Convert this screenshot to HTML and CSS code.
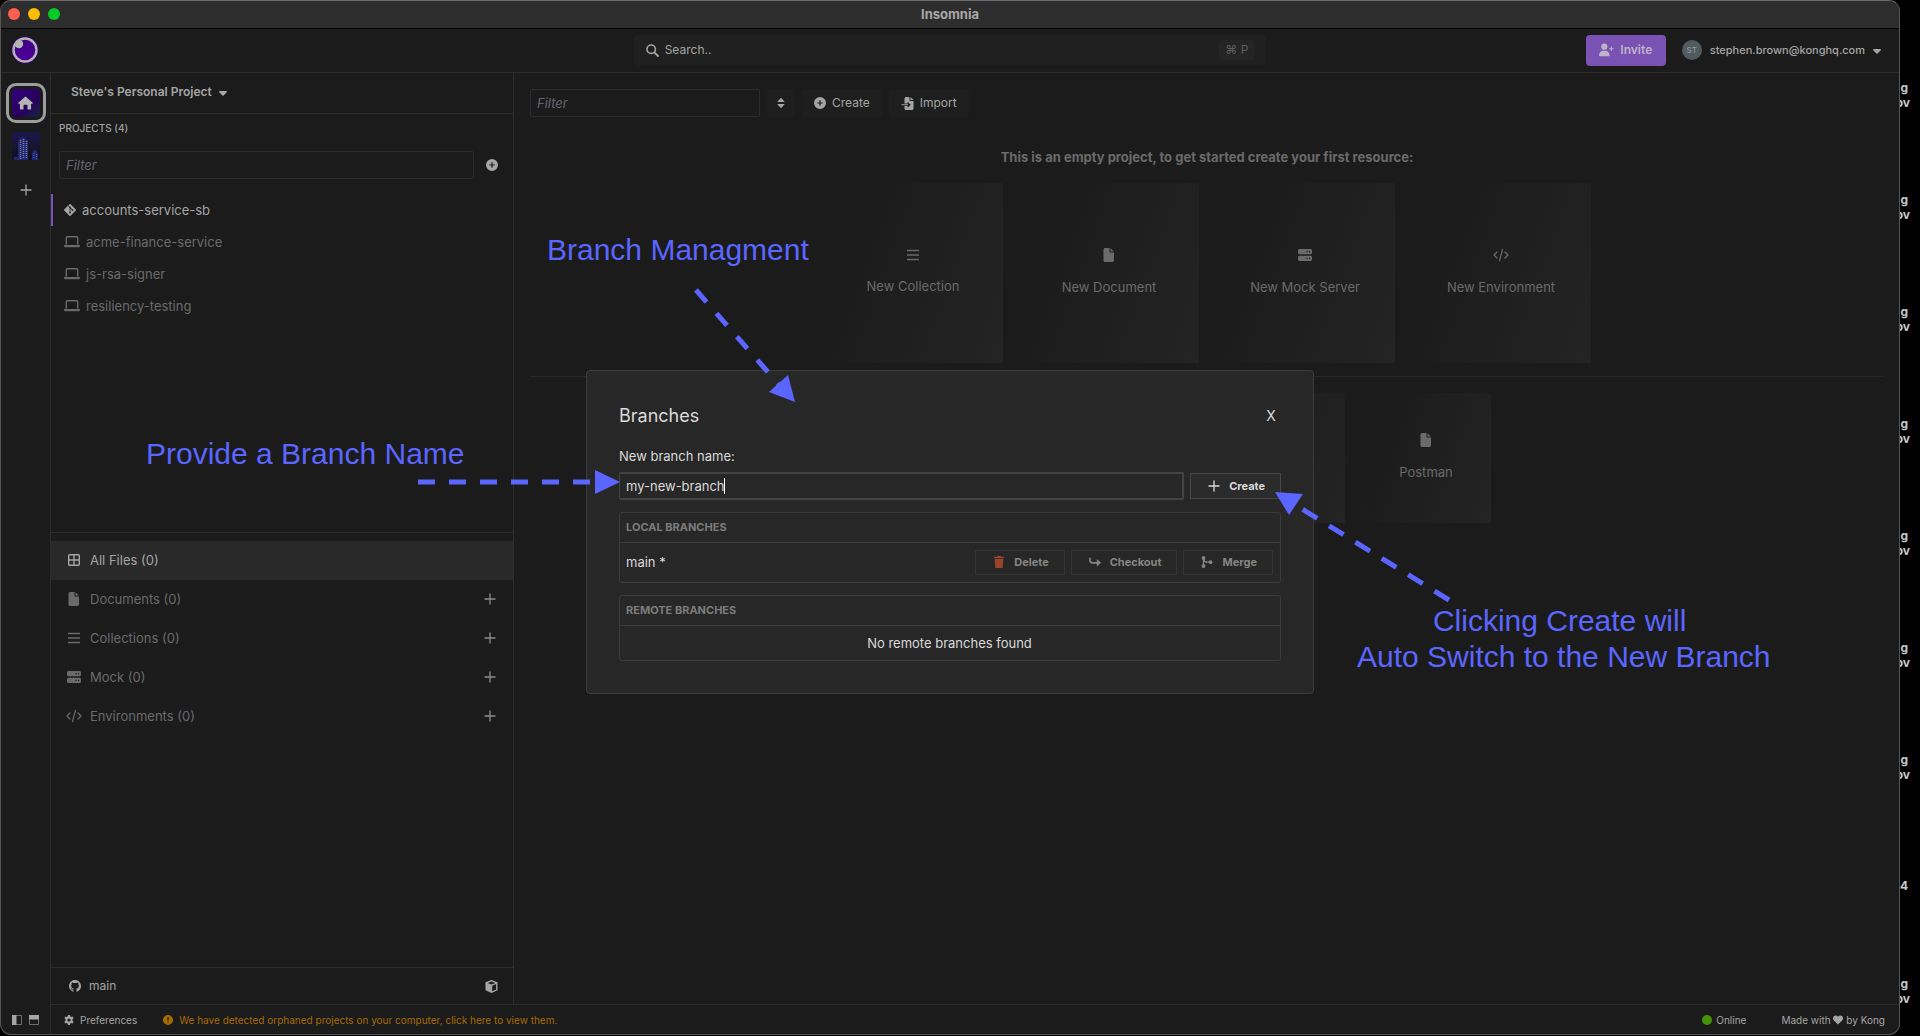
FILE: index.html
```html
<!DOCTYPE html>
<html lang="en">
<head>
<meta charset="utf-8">
<meta name="viewport" content="width=device-width, initial-scale=1">
<title>Insomnia</title>
<link rel="stylesheet" href="styles.css">
</head>
<body>
<svg class="sprite" aria-hidden="true">
  <symbol id="i-caret" viewBox="0 0 320 512"><path d="M137.4 374.6c12.5 12.5 32.8 12.5 45.3 0l128-128c9.2-9.2 11.9-22.9 6.9-34.9s-16.6-19.8-29.6-19.8L32 192c-12.9 0-24.6 7.8-29.6 19.8s-2.2 25.7 6.9 34.9l128 128z"/></symbol>
  <symbol id="i-search" viewBox="0 0 13 13"><circle cx="5.2" cy="5.2" r="4.2" fill="none" stroke="currentColor" stroke-width="1.6"/><path d="M8.3 8.3L12 12" stroke="currentColor" stroke-width="1.8" stroke-linecap="round"/></symbol>
  <symbol id="i-plus" viewBox="0 0 12 12"><path d="M6 1v10M1 6h10" fill="none" stroke="currentColor" stroke-width="1.3" stroke-linecap="round"/></symbol>
  <symbol id="i-circle-plus" viewBox="0 0 12 12"><path fill-rule="evenodd" d="M6 0a6 6 0 1 1 0 12A6 6 0 0 1 6 0zM5.4 3.3v2.1H3.3v1.2h2.1v2.1h1.2V6.6h2.1V5.4H6.6V3.3z"/></symbol>
  <symbol id="i-git" viewBox="0 32 448 448"><path d="M439.55 236.05L244 40.45a28.87 28.87 0 0 0-40.81 0l-40.66 40.63 51.52 51.52c27.06-9.14 52.68 16.77 43.39 43.68l49.66 49.66c34.23-11.8 61.18 31 35.47 56.69-26.49 26.49-70.21-2.87-56-37.34L240.22 199v121.85c25.3 12.54 22.26 41.85 9.08 55a34.34 34.34 0 0 1-48.55 0c-17.57-17.6-11.07-46.91 11.25-56v-123c-20.8-8.51-24.6-30.74-18.64-45L142.57 101 8.45 235.14a28.86 28.86 0 0 0 0 40.81l195.61 195.6a28.86 28.86 0 0 0 40.8 0l194.69-194.69a28.86 28.86 0 0 0 0-40.81z"/></symbol>
  <symbol id="i-laptop" viewBox="0 0 16 13"><path d="M2.3 9V2.2c0-.6.4-1 1-1h9.4c.6 0 1 .4 1 1V9" fill="none" stroke="currentColor" stroke-width="1.4"/><path d="M0 9.6h16v.6c0 1-.8 1.600-1.600 1.600H1.600C.8 11.800 0 11.200 0 10.200z"/></symbol>
  <symbol id="i-grid" viewBox="0 0 12 12"><path d="M1.700.7h8.600a1 1 0 0 1 1 1v8.600a1 1 0 0 1-1 1H1.700a1 1 0 0 1-1-1V1.700a1 1 0 0 1 1-1zM6 1v10M1 6h10" fill="none" stroke="currentColor" stroke-width="1.400"/></symbol>
  <symbol id="i-file" viewBox="0 0 11 14"><path d="M1.500 0H6v3.500c0 .6.400 1 1 1h3.500v8c0 .8-.7 1.500-1.500 1.500H1.500C.7 14 0 13.300 0 12.500v-11C0 .7.700 0 1.500 0z"/><path d="M7 .2L10.300 3.500H7z"/></symbol>
  <symbol id="i-bars" viewBox="0 0 12 12"><path d="M0 1.500h12M0 6h12M0 10.500h12" stroke="currentColor" stroke-width="1.300"/></symbol>
  <symbol id="i-server" viewBox="0 0 14 12"><path fill-rule="evenodd" d="M1.500 0h11C13.300 0 14 .7 14 1.500v2.200c0 .8-.7 1.500-1.500 1.500h-11C.7 5.200 0 4.500 0 3.700V1.500C0 .7.700 0 1.500 0zM8.500 2v1.200h1.200V2zM11 2v1.200h1.200V2zM1.500 6.800h11c.8 0 1.500.7 1.500 1.500v2.200c0 .8-.7 1.500-1.500 1.500h-11C.7 12 0 11.300 0 10.500V8.300c0-.8.7-1.500 1.500-1.500zM8.500 8.800V10h1.200V8.800zM11 8.800V10h1.200V8.800z"/></symbol>
  <symbol id="i-code" viewBox="0 0 16 13"><path d="M4 3.500L1 6.500l3 3M12 3.500l3 3-3 3M9.500.8l-3 11.400" fill="none" stroke="currentColor" stroke-width="1.300" stroke-linecap="round" stroke-linejoin="round"/></symbol>
  <symbol id="i-sort" viewBox="0 0 8 12"><path d="M4 .8L7.800 5H.2zM4 11.200L.2 7h7.600z"/></symbol>
  <symbol id="i-import" viewBox="0 0 12 13"><path fill-rule="evenodd" d="M4.500 0H8v3c0 .6.400 1 1 1h3v7.500c0 .8-.7 1.500-1.500 1.500h-6C3.700 13 3 12.300 3 11.500V9h3v1.800L9.200 7.700 6 4.700V6.500H3v-5C3 .7 3.700 0 4.500 0z"/><path d="M9 0l3 3H9zM0 7.200h6.500v1H0z"/></symbol>
  <symbol id="i-user-plus" viewBox="0 0 15 13"><circle cx="5.300" cy="3.200" r="3.100"/><path d="M0 12c0-2.800 2-4.700 4.300-4.700h2c2.300 0 4.300 1.900 4.300 4.700 0 .5-.3.800-.8.800h-9C.3 12.800 0 12.500 0 12zM11.900 3h1v1.700h1.700v1h-1.700v1.700h-1V5.700h-1.700v-1h1.700z"/></symbol>
  <symbol id="i-house" viewBox="0 0 15 13"><path d="M7.500 0L15 6.500l-.6.800h-1.300V12c0 .6-.4 1-1 1H9.500V9c0-.4-.3-.7-.7-.7H6.200c-.4 0-.7.3-.7.700v4H2.900c-.6 0-1-.4-1-1V7.300H.6L0 6.500z"/></symbol>
  <symbol id="i-github" viewBox="0 0 16 16"><path d="M8 0C3.580 0 0 3.580 0 8c0 3.540 2.290 6.530 5.470 7.590.4.070.55-.17.55-.38 0-.19-.01-.82-.01-1.490-2.010.37-2.530-.49-2.690-.94-.09-.23-.48-.94-.82-1.130-.28-.15-.68-.52-.01-.53.63-.01 1.080.58 1.230.82.720 1.210 1.870.87 2.330.66.070-.52.280-.87.510-1.070-1.780-.2-3.640-.89-3.640-3.950 0-.87.310-1.590.820-2.150-.08-.2-.36-1.020.080-2.120 0 0 .67-.21 2.200.82.640-.18 1.320-.27 2-.27.680 0 1.360.090 2 .27 1.530-1.040 2.200-.82 2.200-.82.440 1.100.16 1.920.080 2.120.51.56.82 1.270.82 2.150 0 3.070-1.870 3.750-3.650 3.950.29.250.54.73.54 1.480 0 1.070-.01 1.930-.01 2.200 0 .21.150.46.550.38A8.013 8.013 0 0016 8c0-4.420-3.580-8-8-8z"/></symbol>
  <symbol id="i-cube" viewBox="0 0 12 13"><path fill-rule="evenodd" d="M6 0l6 2.300v8L6 13l-6-2.700v-8zM6 1.500L2.200 2.900 6 4.400l3.800-1.500zM6.700 5.700v5.500l3.900-1.800V4.100z"/></symbol>
  <symbol id="i-gear" viewBox="0 0 12 12"><path fill-rule="evenodd" d="M4.800 0h2.400l.4 1.700 1 .6 1.700-.5 1.200 2.100-1.300 1.200v1.800l1.300 1.200-1.200 2.100-1.700-.5-1 .6L7.200 12H4.800l-.4-1.700-1-.6-1.700.5L.5 8.100l1.300-1.200V5.100L.5 3.900l1.200-2.100 1.700.5 1-.6zM6 4.100a1.900 1.900 0 1 0 0 3.800 1.900 1.900 0 0 0 0-3.800z"/></symbol>
  <symbol id="i-alert" viewBox="0 0 12 12"><path fill-rule="evenodd" d="M6 0a6 6 0 1 1 0 12A6 6 0 0 1 6 0zM5.300 2.800v3.700h1.400V2.800zM5.300 7.800v1.400h1.400V7.800z"/></symbol>
  <symbol id="i-heart" viewBox="0 0 12 11"><path d="M6 11L1 6.200C-.5 4.600-.3 2 1.300.8 2.800-.4 4.800 0 6 1.500 7.200 0 9.200-.4 10.700.8c1.600 1.200 1.800 3.800.3 5.400z"/></symbol>
  <symbol id="i-trash" viewBox="0 0 10 12"><path d="M3.200 0h3.600l.5.700H10v1.200H0V.7h2.700zM.7 2.700h8.600l-.5 8.200c0 .6-.5 1.100-1.100 1.100H2.300c-.6 0-1.100-.5-1.100-1.100z"/></symbol>
  <symbol id="i-turn" viewBox="0 0 12 9"><path d="M1 .8v2c0 1.500 1 2.500 2.500 2.500h5" fill="none" stroke="currentColor" stroke-width="1.700" stroke-linecap="round"/><path d="M7.800 1.500L12 5.300 7.800 9z"/></symbol>
  <symbol id="i-merge" viewBox="0 0 11 12"><circle cx="2" cy="2" r="1.900"/><circle cx="2" cy="10" r="1.900"/><circle cx="9" cy="6.200" r="1.900"/><path d="M2 2v8M2 3c.5 2.300 2 3.200 4 3.200h3" fill="none" stroke="currentColor" stroke-width="1.300"/></symbol>
  <symbol id="i-panel-left" viewBox="0 0 10 10"><path d="M.5.5h9v9h-9z" fill="none" stroke="currentColor" opacity=".6"/><path d="M0 0h4.500v10H0z"/></symbol>
  <symbol id="i-panel-top" viewBox="0 0 10 10"><path d="M.5.5h9v9h-9z" fill="none" stroke="currentColor" opacity=".6"/><path d="M0 0h10v4.500H0z"/></symbol>
</svg>

<div class="desktop">
  <main class="window">
    <div class="titlebar">
      <div class="lights"><span class="light red"></span><span class="light yellow"></span><span class="light green"></span></div>
      <h1 class="window-title">Insomnia</h1>
    </div>

    <div class="app">
      <header class="topbar">
        <svg class="logo" viewBox="0 0 28 28" aria-label="Insomnia">
          <defs><linearGradient id="logo-fill" x1="0" y1="0" x2="0" y2="1"><stop offset="0" stop-color="#3d0080"/><stop offset="1" stop-color="#51009c"/></linearGradient></defs>
          <circle cx="14" cy="14" r="13.500" fill="#3b0087"/>
          <circle cx="14" cy="14" r="11.500" fill="url(#logo-fill)" stroke="#b4b4b4" stroke-width="2.400"/>
          <circle cx="8" cy="8" r="4.200" fill="#b4b4b4"/>
        </svg>
        <button class="search" type="button">
          <svg class="icon i13"><use href="#i-search"/></svg><span>Search..</span><kbd class="shortcut">⌘ P</kbd>
        </button>
        <div class="account">
          <button class="invite" type="button"><svg class="icon i15"><use href="#i-user-plus"/></svg>Invite</button>
          <button class="user" type="button"><span class="avatar">ST</span><span>stephen.brown@konghq.com</span><svg class="icon caret"><use href="#i-caret"/></svg></button>
        </div>
      </header>

      <nav class="rail" aria-label="Organizations">
        <div class="orgs">
          <a class="org org-home" href="#" aria-label="Home"><span class="tile"><svg class="icon i15"><use href="#i-house"/></svg></span></a>
          <a class="org" href="#" aria-label="Organization">
            <svg class="tile-art" viewBox="0 0 28 28">
              <defs><linearGradient id="sky" x1="0" y1="0" x2="0" y2="1"><stop offset="0" stop-color="#1c1750"/><stop offset=".55" stop-color="#17142e"/><stop offset="1" stop-color="#0e0e22"/></linearGradient></defs>
              <rect width="28" height="28" rx="4" fill="url(#sky)"/>
              <path d="M6 9l2-2V5.500h5V7l3 1.500V28H6z" fill="#20286b"/>
              <path d="M2 25h4v3H2zM20 21l2-3h2l2 4v6h-6z" fill="#202a70"/>
              <path d="M8.500 8v19M11.500 7v20M14.500 9v18" stroke="#7a80b0" stroke-width="1.500" stroke-dasharray="1 1"/>
              <path d="M22 21v6M24.500 22v5" stroke="#4a55a0" stroke-dasharray="1 1"/>
            </svg>
          </a>
          <button class="add-org" type="button" aria-label="Add organization"><svg class="icon i12"><use href="#i-plus"/></svg></button>
        </div>
        <div class="panels">
          <button type="button" aria-label="Toggle sidebar"><svg class="icon i10"><use href="#i-panel-left"/></svg></button>
          <button type="button" aria-label="Toggle layout"><svg class="icon i10"><use href="#i-panel-top"/></svg></button>
        </div>
      </nav>

      <aside class="sidebar">
        <button class="org-menu" type="button">Steve's Personal Project<svg class="icon caret"><use href="#i-caret"/></svg></button>
        <div class="lists">
          <section class="projects">
            <h2 class="caption">PROJECTS (4)</h2>
            <div class="filter-row">
              <input class="filter" type="text" placeholder="Filter" aria-label="Filter projects">
              <button class="plain" type="button" aria-label="Create project"><svg class="icon i12"><use href="#i-circle-plus"/></svg></button>
            </div>
            <ul class="project-list">
              <li><a class="project current" href="#"><svg class="icon i12"><use href="#i-git"/></svg>accounts-service-sb</a></li>
              <li><a class="project" href="#"><svg class="icon i16"><use href="#i-laptop"/></svg>acme-finance-service</a></li>
              <li><a class="project" href="#"><svg class="icon i16"><use href="#i-laptop"/></svg>js-rsa-signer</a></li>
              <li><a class="project" href="#"><svg class="icon i16"><use href="#i-laptop"/></svg>resiliency-testing</a></li>
            </ul>
          </section>
          <ul class="scopes">
            <li class="scope current"><a href="#"><svg class="icon i12"><use href="#i-grid"/></svg>All Files (0)</a></li>
            <li class="scope"><a href="#"><svg class="icon i14"><use href="#i-file"/></svg>Documents (0)</a><button class="plain" type="button" aria-label="New document"><svg class="icon i12"><use href="#i-plus"/></svg></button></li>
            <li class="scope"><a href="#"><svg class="icon i12"><use href="#i-bars"/></svg>Collections (0)</a><button class="plain" type="button" aria-label="New collection"><svg class="icon i12"><use href="#i-plus"/></svg></button></li>
            <li class="scope"><a href="#"><svg class="icon i14"><use href="#i-server"/></svg>Mock (0)</a><button class="plain" type="button" aria-label="New mock server"><svg class="icon i12"><use href="#i-plus"/></svg></button></li>
            <li class="scope"><a href="#"><svg class="icon i16"><use href="#i-code"/></svg>Environments (0)</a><button class="plain" type="button" aria-label="New environment"><svg class="icon i12"><use href="#i-plus"/></svg></button></li>
          </ul>
        </div>
        <div class="git-bar">
          <button class="plain branch" type="button"><svg class="icon i12"><use href="#i-github"/></svg>main</button>
          <button class="plain" type="button" aria-label="Commit"><svg class="icon i13"><use href="#i-cube"/></svg></button>
        </div>
      </aside>

      <section class="content">
        <div class="toolbar">
          <input class="filter" type="text" placeholder="Filter" aria-label="Filter files">
          <button class="tool sort" type="button" aria-label="Sort"><svg class="icon i12"><use href="#i-sort"/></svg></button>
          <button class="tool" type="button"><svg class="icon i12"><use href="#i-circle-plus"/></svg>Create</button>
          <button class="tool" type="button"><svg class="icon i13"><use href="#i-import"/></svg>Import</button>
        </div>
        <p class="empty">This is an empty project, to get started create your first resource:</p>
        <div class="cards">
          <button class="card" type="button"><svg class="icon i12"><use href="#i-bars"/></svg>New Collection</button>
          <button class="card" type="button"><svg class="icon i14"><use href="#i-file"/></svg>New Document</button>
          <button class="card" type="button"><svg class="icon i14"><use href="#i-server"/></svg>New Mock Server</button>
          <button class="card" type="button"><svg class="icon i16"><use href="#i-code"/></svg>New Environment</button>
        </div>
        <hr class="rule">
        <div class="cards sources">
          <div class="card"></div>
          <div class="card"></div>
          <div class="card"></div>
          <button class="card" type="button"><svg class="icon i14"><use href="#i-file"/></svg>Postman</button>
        </div>
      </section>

      <footer class="statusbar">
        <button class="plain status" type="button"><svg class="icon i10"><use href="#i-gear"/></svg>Preferences</button>
        <button class="plain status warning" type="button"><svg class="icon i10"><use href="#i-alert"/></svg>We have detected orphaned projects on your computer, click here to view them.</button>
        <span class="status online"><span class="dot"></span>Online</span>
        <a class="status credit" href="#">Made with <svg class="icon i10"><use href="#i-heart"/></svg> by Kong</a>
      </footer>
    </div>

    <div class="backdrop">
      <div class="dialog" role="dialog" aria-labelledby="dialog-title">
        <div class="dialog-head">
          <h2 class="dialog-title" id="dialog-title">Branches</h2>
          <button class="close" type="button" aria-label="Close">X</button>
        </div>
        <form class="new-branch">
          <label class="field-label" for="branch">New branch name:</label>
          <div class="field-row">
            <div class="field"><input class="branch-input" id="branch" type="text" value="my-new-branch"><span class="text-caret"></span></div>
            <button class="btn primary" type="button"><svg class="icon i12"><use href="#i-plus"/></svg>Create</button>
          </div>
        </form>
        <table class="branches">
          <thead><tr><th colspan="2" scope="col">LOCAL BRANCHES</th></tr></thead>
          <tbody><tr>
            <td>main *</td>
            <td class="actions-cell"><div class="actions">
              <button class="btn" type="button"><svg class="icon i12 danger"><use href="#i-trash"/></svg>Delete</button>
              <button class="btn" type="button"><svg class="icon i12"><use href="#i-turn"/></svg>Checkout</button>
              <button class="btn" type="button"><svg class="icon i12"><use href="#i-merge"/></svg>Merge</button>
            </div></td>
          </tr></tbody>
        </table>
        <table class="branches">
          <thead><tr><th scope="col">REMOTE BRANCHES</th></tr></thead>
          <tbody><tr><td class="none">No remote branches found</td></tr></tbody>
        </table>
      </div>
    </div>
  </main>

  <ul class="behind">
    <li><span>g</span><span>ov</span></li>
    <li><span>g</span><span>ov</span></li>
    <li><span>g</span><span>ov</span></li>
    <li><span>g</span><span>ov</span></li>
    <li><span>g</span><span>ov</span></li>
    <li><span>g</span><span>ov</span></li>
    <li><span>g</span><span>ov</span></li>
    <li class="short"><span>4</span></li>
    <li><span>g</span><span>ov</span></li>
  </ul>

  <svg class="arrows" width="1920" height="1036" aria-hidden="true">
    <g fill="none" stroke="#5a66ff" stroke-width="5">
      <path d="M696 290L781 387" stroke-dasharray="16 15"/>
      <path d="M418 482H590" stroke-dasharray="17 14"/>
      <path d="M1449 600L1302 509" stroke-dasharray="17 14"/>
    </g>
    <g fill="#5a66ff">
      <path d="M795 402L788 375L769 392z"/>
      <path d="M620 482L595 470V494z"/>
      <path d="M1275 492L1303 494L1289 515z"/>
    </g>
  </svg>
  <p class="note note-title">Branch Managment</p>
  <p class="note note-name">Provide a Branch Name</p>
  <p class="note note-create">Clicking Create will&nbsp;<br>Auto Switch to the New Branch</p>
</div>
</body>
</html>
```

FILE: styles.css
```css
:root {
  --bg: #1b1b1b;
  --line: #2d2d2d;
  --text: #a5a5a5;
  --muted: #6a6a6a;
  --note: #5a66ff;
}

* { box-sizing: border-box; }

body {
  margin: 0;
  background: #000;
  color: var(--text);
  font: 13px/20px Inter, "Liberation Sans", sans-serif;
}

h1, h2, p, ul { margin: 0; padding: 0; font-size: inherit; font-weight: inherit; }
ul { list-style: none; }
a { color: inherit; text-decoration: none; }
button, input { font: inherit; color: inherit; background: none; border: 0; padding: 0; margin: 0; }
button { display: flex; align-items: center; justify-content: center; }

.sprite { display: none; }
.icon { flex: none; fill: currentColor; }
.i10 { width: 10px; height: 10px; }
.i12 { width: 12px; height: 12px; }
.i13 { width: 13px; height: 13px; }
.i14 { width: 14px; height: 14px; }
.i15 { width: 15px; height: 14px; }
.i16 { width: 16px; height: 14px; }
.caret { width: 8px; height: 13px; }

.desktop {
  position: relative;
  display: grid;
  grid-template-columns: minmax(0, 1fr) 20px;
  min-height: 100vh;
  padding-bottom: 1px;
  overflow: hidden;
}

/* Application window */
.window {
  position: relative;
  display: flex;
  flex-direction: column;
  background: var(--bg);
  border: 1px solid #555;
  border-top-color: #6c6c6c;
  border-radius: 11px;
  overflow: hidden;
}
.titlebar {
  display: grid;
  grid-template-columns: 1fr auto 1fr;
  align-items: center;
  height: 28px;
  padding: 0 7px 2px;
  background: #2d2d2d;
  border-bottom: 1px solid #000;
}
.lights { display: flex; gap: 8px; }
.light { width: 12px; height: 12px; border-radius: 50%; }
.red { background: #ff5f52; }
.yellow { background: #fbbc05; }
.green { background: #07c927; }
.window-title { color: #a8a8a8; font-weight: 700; }

.app {
  flex: 1;
  display: grid;
  grid-template-columns: 50px 463px minmax(0, 1fr);
  grid-template-rows: 44px minmax(0, 1fr) 30px;
  grid-template-areas: "top top top" "rail side main" "rail foot foot";
}

/* Top bar */
.topbar {
  grid-area: top;
  display: grid;
  grid-template-columns: 1fr 1fr 1fr;
  align-items: center;
  padding-bottom: 1px;
  border-bottom: 1px solid var(--line);
}
.logo { width: 28px; height: 28px; margin-left: 10px; }
.search {
  justify-content: flex-start;
  gap: 6px;
  height: 30px;
  padding: 0 12px;
  border-radius: 4px;
  background: #202020;
  font-size: 12px;
}
.shortcut {
  margin-left: auto;
  padding: 0 6px;
  border-radius: 4px;
  background: #252525;
  color: #5e5e5e;
  font: 12px/20px Inter, "DejaVu Sans", sans-serif;
}
.account { display: flex; justify-content: flex-end; gap: 16px; padding-right: 18px; }
.invite {
  gap: 6px;
  width: 80px;
  height: 31px;
  border-radius: 4px;
  background: #7a52b3;
  color: #bdb4c8;
  font-size: 12px;
  font-weight: 600;
}
.user { gap: 8px; font-size: 11px; font-weight: 500; }
.avatar {
  width: 20px;
  height: 20px;
  border-radius: 50%;
  background: #505a5f;
  color: #8f979a;
  font-size: 8px;
}

/* Organization rail */
.rail {
  grid-area: rail;
  display: flex;
  flex-direction: column;
  justify-content: space-between;
  border-right: 1px solid var(--line);
}
.orgs { display: flex; flex-direction: column; align-items: center; padding-top: 10px; }
.org { display: flex; padding: 6px; }
.org + .org { margin-top: 3px; }
.org-home { padding: 3px; border: 3px solid #9d9d9d; border-radius: 10px; }
.tile {
  display: flex;
  align-items: center;
  justify-content: center;
  width: 28px;
  height: 28px;
  border-radius: 4px;
  background: linear-gradient(135deg, #340080, #28005c 60%, #14283c);
  color: #b4b4b4;
}
.tile-art { width: 28px; height: 28px; }
.add-org { width: 28px; height: 28px; margin-top: 10px; }
.panels { display: flex; gap: 7px; padding: 0 0 9px 11px; }

/* Sidebar */
.sidebar {
  grid-area: side;
  display: flex;
  flex-direction: column;
  border-right: 1px solid var(--line);
}
.org-menu {
  justify-content: flex-start;
  gap: 7px;
  height: 41px;
  padding: 0 20px 2px;
  border-bottom: 1px solid var(--line);
  font-size: 12px;
  font-weight: 600;
}
.lists { flex: 1; display: flex; flex-direction: column; }
.projects { flex: 1; }
.caption { padding: 4px 8px; font-size: 10px; font-weight: 500; color: #a0a0a0; }
.filter-row { display: flex; align-items: center; gap: 12px; padding: 9px 15px 0 8px; }
.filter {
  height: 28px;
  padding: 0 6px;
  border: 1px solid var(--line);
  border-radius: 2px;
}
.filter::placeholder { color: #666670; font-style: italic; opacity: 1; }
.filter-row .filter { flex: 1; }
.plain { min-width: 12px; }
.project-list { padding-top: 15px; }
.project {
  display: flex;
  align-items: center;
  gap: 6px;
  height: 32px;
  padding-left: 11px;
  border-left: 2px solid transparent;
  color: var(--muted);
}
.project.current { color: var(--text); border-left-color: #7a52b3; }
.scopes {
  flex: 0 0 51%;
  padding-top: 8px;
  border-top: 1px solid var(--line);
}
.scope {
  display: flex;
  align-items: center;
  justify-content: space-between;
  height: 39px;
  padding: 0 17px 0 14px;
  color: var(--muted);
}
.scope a { display: grid; grid-template-columns: 17px auto; gap: 8px; align-items: center; }
.scope a .icon { justify-self: center; }
.scope.current { background: #292929; color: var(--text); }
.scope .plain { color: #8c8c8c; }
.git-bar {
  display: flex;
  align-items: center;
  justify-content: space-between;
  height: 37px;
  padding: 0 15px 0 18px;
  border-top: 1px solid var(--line);
  font-size: 12px;
}
.branch { gap: 8px; }

/* Main area */
.content { grid-area: main; padding: 16px 15px 16px 16px; }
.toolbar { display: flex; gap: 7px; }
.toolbar .filter { width: 230px; }
.tool {
  gap: 6px;
  height: 28px;
  padding: 0 12px;
  border-radius: 2px;
  background: #1e1e1e;
  font-size: 12px;
}
.tool.sort { padding: 0 8px; }
.empty { padding: 30px 0 16px; text-align: center; font-weight: 700; color: var(--muted); }
.cards { display: flex; justify-content: center; gap: 16px; }
.card {
  flex-direction: column;
  gap: 15px;
  width: 180px;
  height: 180px;
  padding-bottom: 1px;
  border-radius: 2px;
  background: linear-gradient(110deg, #1b1b1b 15%, #242424);
  color: var(--muted);
}
.rule { margin: 13px 0 16px; border: 0; border-top: 1px solid #272727; }
.sources .card { width: 130px; height: 130px; }

/* Status bar */
.statusbar {
  grid-area: foot;
  display: flex;
  align-items: center;
  padding: 0 14px 0 13px;
  border-top: 1px solid var(--line);
  font-size: 10px;
}
.status { display: flex; align-items: center; gap: 6px; }
.warning { margin-left: 26px; color: #a86a05; }
.online { margin-left: auto; gap: 4px; }
.credit { gap: 0; margin-left: 35px; white-space: pre; }
.dot { width: 10px; height: 10px; border-radius: 50%; background: #459303; }

/* Branches dialog */
.backdrop {
  position: absolute;
  inset: 28px 0 0;
  display: flex;
  align-items: center;
  justify-content: center;
}
.dialog {
  width: 728px;
  padding: 33px 32px 32px;
  border: 1px solid #3b3b3b;
  border-radius: 4px;
  background: #272727;
  color: #dadada;
}
.dialog-head { display: flex; align-items: center; justify-content: space-between; height: 24px; }
.dialog-title { font-size: 18px; line-height: 24px; }
.close { width: 20px; height: 20px; font-size: 14px; }
.field-label { display: block; padding: 18px 0 6px; }
.field-row { display: flex; align-items: center; gap: 6px; }
.field { position: relative; flex: 1; display: flex; }
.branch-input {
  flex: 1;
  height: 28px;
  padding: 0 6px;
  border: 2px solid #434343;
  border-left-width: 1px;
  border-radius: 2px;
  outline: 0;
}
.text-caret { position: absolute; top: 6px; left: 105px; width: 1px; height: 16px; background: #fff; }
.btn {
  gap: 9px;
  height: 25px;
  padding: 0 15px 0 17px;
  border: 1px solid #353535;
  color: #858585;
  font-size: 11px;
  font-weight: 700;
}
.btn.primary { height: 26px; border-color: #474747; background: #2b2b2b; color: #dadada; }
.danger { color: #9c432a; }
.branches {
  width: 100%;
  margin-top: 12px;
  border: 1px solid #3b3b3b;
  border-radius: 3px;
  border-spacing: 0;
}
.branches th {
  height: 30px;
  padding: 0 6px;
  border-bottom: 1px solid #3b3b3b;
  color: #7c7c7c;
  font-size: 11px;
  font-weight: 700;
  text-align: left;
}
.branches td { height: 39px; padding: 0 7px 0 6px; }
.branches .none { height: 34px; text-align: center; }
.actions { display: flex; justify-content: flex-end; gap: 6px; }

/* File names peeking out behind the window */
.behind {
  padding-top: 80px;
  color: #c8c8c8;
  font-size: 12px;
  font-weight: 700;
  line-height: 15px;
}
.behind li { display: grid; grid-template-rows: 15px 15px; width: 10px; height: 112px; overflow: hidden; }
.behind li:last-child { height: 30px; }
.behind span { display: flex; justify-content: flex-end; width: 10px; }
.behind span:first-child { width: 8px; }
.behind .short { padding-top: 14px; }

/* Annotations */
.arrows { position: absolute; top: 0; left: 0; pointer-events: none; }
.note {
  position: absolute;
  color: var(--note);
  font: 30px/36px "Liberation Sans", sans-serif;
  text-align: center;
  white-space: nowrap;
}
.note-title { top: 232px; left: 547px; }
.note-name { top: 436px; left: 146px; }
.note-create { top: 603px; left: 1357px; }
```
